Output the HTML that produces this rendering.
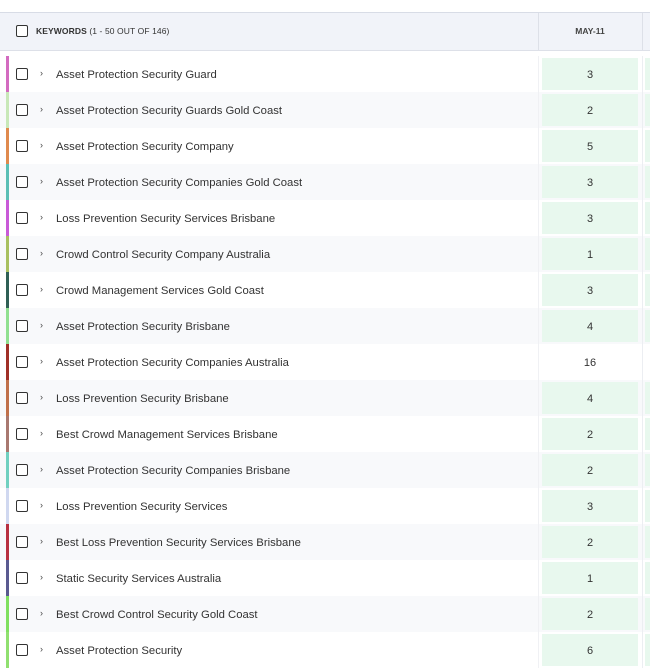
<!DOCTYPE html><html><head><style>
body{margin:0;width:650px;height:666px;overflow:hidden;background:#fff;font-family:"Liberation Sans",sans-serif;color:#333;position:relative}
.top{position:absolute;left:0;top:0;width:650px;height:12px;background:#fff;border-bottom:1px solid #d8dce6}
.hdr{position:absolute;left:0;top:13px;width:650px;height:37px;background:#f1f3f9;border-bottom:1px solid #dde0e8}
.cb{position:absolute;width:10px;height:10px;border:1.5px solid #333;border-radius:2px;background:#fff}
.hk{position:absolute;left:36px;top:13px;font-size:8.5px;font-weight:bold;color:#333;letter-spacing:.1px}
.hk span{font-weight:normal}
.vl{position:absolute;top:13px;width:1px;height:37px;background:#dde0e8}
.may{position:absolute;left:538px;width:104px;top:13px;text-align:center;font-size:8.5px;font-weight:bold;color:#444;line-height:37px}
.row{position:absolute;left:0;width:650px;height:36px}
.row.g{background:#f8f9fb}
.bar{position:absolute;left:6px;top:0;width:2.5px;height:36px}
.ch{position:absolute;left:40px;top:12px;font-size:9px;color:#444}
.kw{position:absolute;left:56px;top:1px;line-height:36px;font-size:11.3px;color:#333}
.cell{position:absolute;left:542px;top:2px;width:96px;height:32px;background:#e8f8ee;text-align:center;line-height:34px;font-size:11px;color:#333}
.cell.w{background:#fff}
.sep{position:absolute;left:538px;top:0;width:1px;height:36px;background:#f0f1f4}
.sep2{position:absolute;left:642px;top:0;width:1px;height:36px;background:#eceef2}
.next{position:absolute;left:645px;top:2px;width:5px;height:32px;background:#e8f8ee}
</style></head><body>
<div class="top"></div>
<div class="hdr"><div class="cb" style="left:16px;top:12px"></div><div class="hk">KEYWORDS <span>(1 - 50 OUT OF 146)</span></div></div>
<div class="vl" style="left:538px"></div><div class="vl" style="left:642px"></div>
<div class="may">MAY-11</div>
<div id="rows"></div>
<script>
var d=[["Asset Protection Security Guard",3,"#d36bc0"],["Asset Protection Security Guards Gold Coast",2,"#c8e8b8"],["Asset Protection Security Company",5,"#e08a4e"],["Asset Protection Security Companies Gold Coast",3,"#5bbfb5"],["Loss Prevention Security Services Brisbane",3,"#c95ad8"],["Crowd Control Security Company Australia",1,"#a8c060"],["Crowd Management Services Gold Coast",3,"#2f5f55"],["Asset Protection Security Brisbane",4,"#90e090"],["Asset Protection Security Companies Australia",16,"#a03028"],["Loss Prevention Security Brisbane",4,"#c0704a"],["Best Crowd Management Services Brisbane",2,"#a87870"],["Asset Protection Security Companies Brisbane",2,"#70d0c0"],["Loss Prevention Security Services",3,"#d0d8f0"],["Best Loss Prevention Security Services Brisbane",2,"#b83040"],["Static Security Services Australia",1,"#5a5a90"],["Best Crowd Control Security Gold Coast",2,"#80e060"],["Asset Protection Security",6,"#90e070"]];
var h="";d.forEach(function(r,i){var t=56+i*36;h+='<div class="row'+(i%2?' g':'')+'" style="top:'+t+'px"><div class="bar" style="background:'+r[2]+'"></div><div class="cb" style="left:16px;top:12px"></div><div class="ch">›</div><div class="kw">'+r[0]+'</div><div class="sep"></div><div class="cell'+(r[1]==16?' w':'')+'">'+r[1]+'</div><div class="sep2"></div><div class="next"'+(r[1]==16?' style="background:#fff"':'')+'></div></div>'});
document.getElementById("rows").innerHTML=h;
</script>
</body></html>
